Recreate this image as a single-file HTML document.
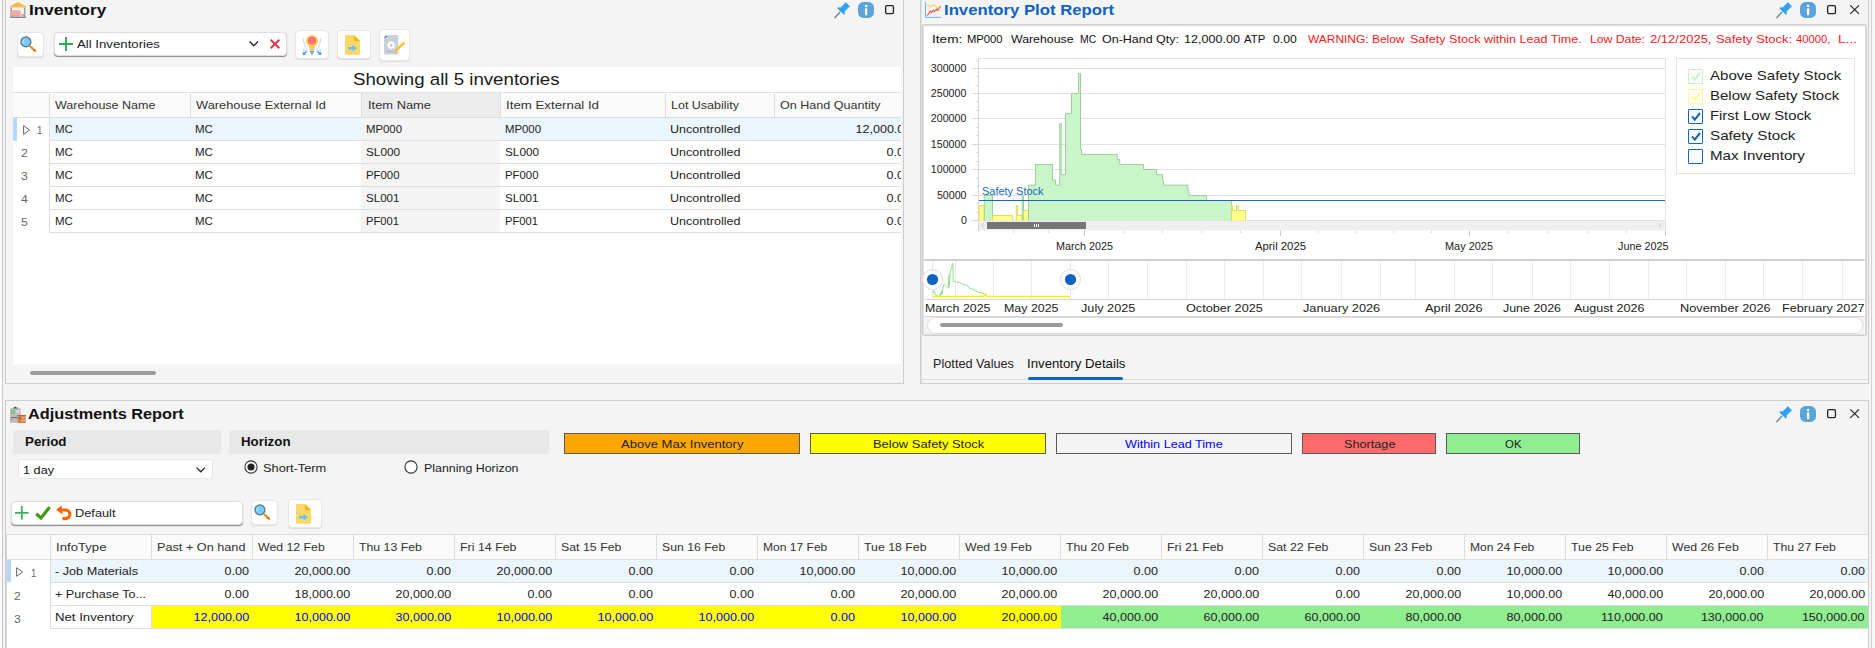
<!DOCTYPE html><html><head><meta charset="utf-8"><title>Inventory</title><style>
*{box-sizing:border-box;margin:0;padding:0}
html,body{width:1875px;height:648px;overflow:hidden;background:#f4f4f4}
body{position:relative;font-family:"Liberation Sans",sans-serif;font-size:11.3px;color:#222}
.a{position:absolute}
.t{position:absolute;white-space:nowrap;line-height:16px;height:16px}
.r{text-align:right}
.n{letter-spacing:0}
.b{font-weight:bold}
.hl{position:absolute;height:1px;background:#e2e2e2}
.vl{position:absolute;width:1px;background:#e2e2e2}
.btn{position:absolute;background:#fff;border:1px solid #e6e6e6;border-radius:4px;box-shadow:0 1px 1px rgba(0,0,0,.10)}
.inp{position:absolute;background:#fff;border:1px solid #dedede;border-radius:4px;box-shadow:0 1px 1px rgba(0,0,0,.45)}
svg{position:absolute;overflow:visible}
</style></head><body><div class="a" style="left:0px;top:0px;width:2px;height:648px;background:#fbfbfb"></div><div class="a" style="left:2px;top:0px;width:1px;height:648px;background:#c6c6c6"></div><div class="a" style="left:5px;top:-1px;width:899px;height:385px;border:1px solid #cdcdcd"></div><div class="a" style="left:920px;top:-1px;width:949px;height:385px;border:1px solid #cdcdcd"></div><div class="a" style="left:5px;top:400px;width:1864px;height:260px;border:1px solid #cdcdcd"></div><svg style="left:10px;top:2px" width="16" height="16" viewBox="0 0 16 16"><path d="M8 0 L16 4.3 V5.6 H0 V4.3Z" fill="#ffb74d"/><rect x=".6" y="5.6" width="1.5" height="9.4" fill="#90a4ae"/><rect x="13.9" y="5.6" width="1.5" height="9.4" fill="#90a4ae"/><rect x=".6" y="8.6" width="9.8" height="6.2" fill="#ea8c88"/><path d="M.6 10.6 H10.4 M.6 12.7 H10.4 M3 8.6 V10.6 M6 8.6 V10.6 M8.6 8.6 V10.6 M1.8 10.6 V12.7 M4.6 10.6 V12.7 M7.4 10.6 V12.7 M3 12.7 V14.8 M6 12.7 V14.8 M8.6 12.7 V14.8" stroke="#f6c9c6" stroke-width=".7"/><rect x="11.6" y="12" width="2.3" height="2.8" fill="#ef9a9a"/><rect x="0" y="14.8" width="16" height="1.2" fill="#78909c"/></svg><div class="t" style="left:29.00px;top:1.20px;line-height:18px;height:18px;font-size:14px;transform-origin:0 50%;transform:scaleX(1.2251);font-weight:bold;color:#111">Inventory</div><svg style="left:834px;top:0.8999999999999999px" width="17" height="17" viewBox="0 0 17 17"><path d="M1 16.6 L5.6 11.4" stroke="#7d8790" stroke-width="1.5" stroke-linecap="round"/><path d="M11.6 1 L16 5.4 L14.6 6.4 L10.6 10.6 L10.9 13.2 L9.6 13.6 L3.5 7.5 L3.9 6.2 L6.5 6.5 L10.7 2.5 Z" fill="#2fa2f5"/></svg><svg style="left:858px;top:2px" width="16" height="16" viewBox="0 0 16 16"><rect x="0" y="0" width="16" height="16" rx="5.6" fill="#5ba4db"/><circle cx="8.1" cy="4.1" r="1.25" fill="#fff"/><rect x="6.95" y="6.3" width="2.3" height="6.9" rx=".6" fill="#fff"/></svg><svg style="left:884.8px;top:4.8px" width="10" height="10" viewBox="0 0 10 10"><rect x=".65" y=".65" width="7.8" height="8" rx="1.3" fill="none" stroke="#222" stroke-width="1.3"/></svg><div class="btn" style="left:17px;top:32px;width:27px;height:25px"></div><svg style="left:20px;top:36px" width="20" height="20" viewBox="0 0 20 20"><path d="M10.6 10.6 L15.2 15" stroke="#f68b1f" stroke-width="2.3" stroke-linecap="round"/><path d="M13.9 13.7 L14.5 14.3" stroke="#6d5a4a" stroke-width="2.3"/><circle cx="5.9" cy="5.9" r="5" fill="#74cbf8" stroke="#546e7a" stroke-width="1.2"/><path d="M3.3 7.2 A3.2 3.2 0 0 1 4.3 3.4" stroke="#d6f0ff" stroke-width=".9" fill="none"/></svg><div class="inp" style="left:54px;top:32px;width:232.7px;height:24px"></div><svg style="left:59px;top:37px" width="14" height="14" viewBox="0 0 14 14"><path d="M7 0 V14 M0 7 H14" stroke="#34a853" stroke-width="1.9"/></svg><div class="t" style="left:77.20px;top:36.20px;line-height:16px;height:16px;font-size:11.3px;transform-origin:0 50%;transform:scaleX(1.1695);">All Inventories</div><svg style="left:249px;top:41px" width="10" height="6" viewBox="0 0 10 6"><path d="M.6 .6 L4.8 4.8 L9 .6" stroke="#222" stroke-width="1.35" fill="none"/></svg><svg style="left:270px;top:39px" width="10" height="10" viewBox="0 0 10 10"><path d="M.7 .7 L9.3 9.3 M9.3 .7 L.7 9.3" stroke="#e5394f" stroke-width="2.1"/></svg><div class="btn" style="left:295px;top:30px;width:34px;height:29px"></div><svg style="left:301px;top:34px" width="22" height="22" viewBox="0 0 22 22"><path d="M2.2 4.2 C2.6 9 4.4 13 6.6 16.6 M19.8 4.2 C19.4 9 17.6 13 15.4 16.6" stroke="#aab4bd" stroke-width=".6" fill="none"/><circle cx="11" cy="7" r="6" fill="#ffc857"/><path d="M7.6 11 H14.4 L13.4 15.4 H8.6Z" fill="#ffc857"/><circle cx="11" cy="6.6" r="3.9" fill="#ef6b73"/><path d="M9 6 C10 4.6 12 4.8 12.6 6.4 M9.6 8.2 C10.6 7.2 12 7.6 12.8 8.6" stroke="#f7a3a8" stroke-width=".7" fill="none"/><rect x="8.9" y="15.4" width="4.2" height="1.3" fill="#b0bec5"/><rect x="8.9" y="17" width="4.2" height="1.3" fill="#78909c"/><path d="M9.4 18.6 H12.6 L11.8 20.4 H10.2Z" fill="#90a4ae"/><path d="M1.6 21 L1.9 17.6 L3 18.6 L5 16.4 L6.2 17.5 L4.1 19.7 L5.2 20.8Z" fill="#4da3ff"/><path d="M2.2 15.2 L4 15.8 L2.8 16.8Z" fill="#4da3ff"/><path d="M20.4 21 L20.1 17.6 L19 18.6 L17 16.4 L15.8 17.5 L17.9 19.7 L16.8 20.8Z" fill="#4da3ff"/><path d="M19.8 15.2 L18 15.8 L19.2 16.8Z" fill="#4da3ff"/></svg><div class="btn" style="left:337px;top:30px;width:34px;height:29px"></div><svg style="left:345px;top:35px" width="15" height="20" viewBox="0 0 15 20"><path d="M1.2 0 H9 L15 6 V18.6 A1.2 1.2 0 0 1 13.8 19.8 H1.2 A1.2 1.2 0 0 1 0 18.6 V1.2 A1.2 1.2 0 0 1 1.2 0Z" fill="#ffd767"/><path d="M9 0 L15 6 H10.2 A1.2 1.2 0 0 1 9 4.8Z" fill="#ffb300"/><path d="M3 11.9 H7.6 V9.6 L11.8 13.2 L7.6 16.8 V14.5 H3Z" fill="#64c3f5"/></svg><div class="btn" style="left:379px;top:29px;width:31px;height:32px"></div><svg style="left:384px;top:35px" width="21" height="20" viewBox="0 0 21 20"><path d="M2.6 0 H14.3 V19.6 H0 V2.6Z" fill="#c8d0da"/><path d="M0 2.6 L2.6 0 V2.6Z" fill="#5f6f86"/><circle cx="7.3" cy="10.2" r="3.1" fill="#fff"/><path d="M7.3 6.1 V14.3 M3.2 10.2 H11.4 M4.4 7.3 L10.2 13.1 M10.2 7.3 L4.4 13.1" stroke="#fff" stroke-width="1.5"/><circle cx="7.3" cy="10.2" r="1.3" fill="#b4bfcc"/><path d="M1.8 16.6 H9" stroke="#9aa7b8" stroke-width=".7"/><path d="M11 16.4 L19.6 8.2" stroke="#fbc02d" stroke-width="2.5" stroke-linecap="round"/></svg><div class="a" style="left:13px;top:67px;width:888px;height:297px;background:#fff"></div><div class="t" style="left:353.30px;top:68.60px;line-height:22px;height:22px;font-size:16.7px;transform-origin:0 50%;transform:scaleX(1.1189);color:#1a1a1a">Showing all 5 inventories</div><div class="a" style="left:13px;top:92px;width:888px;height:26px;background:#fafafa"></div><div class="a" style="left:361px;top:92px;width:139px;height:26px;background:#ececec"></div><div class="a" style="left:361px;top:118px;width:139px;height:115px;background:#f4f4f4"></div><div class="a" style="left:49px;top:118px;width:312px;height:23px;background:#ebf5fd"></div><div class="a" style="left:500px;top:118px;width:401px;height:23px;background:#ebf5fd"></div><div class="a" style="left:13px;top:118px;width:4px;height:23px;background:#b3d9ff"></div><div class="hl" style="left:13px;top:92px;width:888px;"></div><div class="t" style="left:55.25px;top:97.00px;line-height:16px;height:16px;font-size:11.3px;transform-origin:0 50%;transform:scaleX(1.1087);color:#333">Warehouse Name</div><div class="t" style="left:196.25px;top:97.00px;line-height:16px;height:16px;font-size:11.3px;transform-origin:0 50%;transform:scaleX(1.1351);color:#333">Warehouse External Id</div><div class="t" style="left:367.50px;top:97.00px;line-height:16px;height:16px;font-size:11.3px;transform-origin:0 50%;transform:scaleX(1.1401);color:#333">Item Name</div><div class="t" style="left:505.50px;top:97.00px;line-height:16px;height:16px;font-size:11.3px;transform-origin:0 50%;transform:scaleX(1.1752);color:#333">Item External Id</div><div class="t" style="left:671.25px;top:97.00px;line-height:16px;height:16px;font-size:11.3px;transform-origin:0 50%;transform:scaleX(1.1048);color:#333">Lot Usability</div><div class="t" style="left:780.00px;top:97.00px;line-height:16px;height:16px;font-size:11.3px;transform-origin:0 50%;transform:scaleX(1.1111);color:#333">On Hand Quantity</div><div class="vl" style="left:49px;top:93px;height:24px;background:#dcdcdc"></div><div class="vl" style="left:190px;top:93px;height:24px;background:#dcdcdc"></div><div class="vl" style="left:361px;top:93px;height:24px;background:#dcdcdc"></div><div class="vl" style="left:500px;top:93px;height:24px;background:#dcdcdc"></div><div class="vl" style="left:665px;top:93px;height:24px;background:#dcdcdc"></div><div class="vl" style="left:774px;top:93px;height:24px;background:#dcdcdc"></div><div class="vl" style="left:49px;top:118px;height:115px;background:#dcdcdc"></div><div class="hl" style="left:13px;top:117px;width:888px;background:#dedede"></div><div class="hl" style="left:49px;top:140px;width:852px;background:#dedede"></div><div class="hl" style="left:49px;top:163px;width:852px;background:#dedede"></div><div class="hl" style="left:49px;top:186px;width:852px;background:#dedede"></div><div class="hl" style="left:49px;top:209px;width:852px;background:#dedede"></div><div class="hl" style="left:49px;top:232px;width:852px;background:#dedede"></div><svg style="left:22.6px;top:124.6px" width="8" height="10" viewBox="0 0 8 10"><path d="M.6 .7 L6.6 5 L.6 9.3Z" fill="none" stroke="#666" stroke-width="1"/></svg><div class="t" style="left:36.50px;top:122.20px;line-height:16px;height:16px;font-size:11.3px;transform-origin:0 50%;transform:scaleX(0.8500);color:#666">1</div><div class="t" style="left:54.50px;top:121.00px;line-height:16px;height:16px;font-size:11.3px;transform-origin:0 50%;transform:scaleX(1.0129);">MC</div><div class="t" style="left:195.30px;top:121.00px;line-height:16px;height:16px;font-size:11.3px;transform-origin:0 50%;transform:scaleX(1.0186);">MC</div><div class="t" style="left:366.30px;top:121.00px;line-height:16px;height:16px;font-size:11.3px;transform-origin:0 50%;transform:scaleX(1.0055);color:#222">MP000</div><div class="t" style="left:504.50px;top:121.00px;line-height:16px;height:16px;font-size:11.3px;transform-origin:0 50%;transform:scaleX(1.0055);color:#222">MP000</div><div class="t" style="left:670.00px;top:121.00px;line-height:16px;height:16px;font-size:11.3px;transform-origin:0 50%;transform:scaleX(1.1113);">Uncontrolled</div><div class="t" style="left:20.50px;top:145.20px;line-height:16px;height:16px;font-size:11.3px;transform-origin:0 50%;transform:scaleX(1.0820);color:#666">2</div><div class="t" style="left:54.50px;top:144.00px;line-height:16px;height:16px;font-size:11.3px;transform-origin:0 50%;transform:scaleX(1.0129);">MC</div><div class="t" style="left:195.30px;top:144.00px;line-height:16px;height:16px;font-size:11.3px;transform-origin:0 50%;transform:scaleX(1.0186);">MC</div><div class="t" style="left:366.30px;top:144.00px;line-height:16px;height:16px;font-size:11.3px;transform-origin:0 50%;transform:scaleX(1.0405);color:#222">SL000</div><div class="t" style="left:504.50px;top:144.00px;line-height:16px;height:16px;font-size:11.3px;transform-origin:0 50%;transform:scaleX(1.0405);color:#222">SL000</div><div class="t" style="left:670.00px;top:144.00px;line-height:16px;height:16px;font-size:11.3px;transform-origin:0 50%;transform:scaleX(1.1113);">Uncontrolled</div><div class="t" style="left:20.50px;top:168.20px;line-height:16px;height:16px;font-size:11.3px;transform-origin:0 50%;transform:scaleX(1.0820);color:#666">3</div><div class="t" style="left:54.50px;top:167.00px;line-height:16px;height:16px;font-size:11.3px;transform-origin:0 50%;transform:scaleX(1.0129);">MC</div><div class="t" style="left:195.30px;top:167.00px;line-height:16px;height:16px;font-size:11.3px;transform-origin:0 50%;transform:scaleX(1.0186);">MC</div><div class="t" style="left:366.30px;top:167.00px;line-height:16px;height:16px;font-size:11.3px;transform-origin:0 50%;transform:scaleX(1.0062);color:#222">PF000</div><div class="t" style="left:504.50px;top:167.00px;line-height:16px;height:16px;font-size:11.3px;transform-origin:0 50%;transform:scaleX(1.0062);color:#222">PF000</div><div class="t" style="left:670.00px;top:167.00px;line-height:16px;height:16px;font-size:11.3px;transform-origin:0 50%;transform:scaleX(1.1113);">Uncontrolled</div><div class="t" style="left:20.50px;top:191.20px;line-height:16px;height:16px;font-size:11.3px;transform-origin:0 50%;transform:scaleX(1.0820);color:#666">4</div><div class="t" style="left:54.50px;top:190.00px;line-height:16px;height:16px;font-size:11.3px;transform-origin:0 50%;transform:scaleX(1.0129);">MC</div><div class="t" style="left:195.30px;top:190.00px;line-height:16px;height:16px;font-size:11.3px;transform-origin:0 50%;transform:scaleX(1.0186);">MC</div><div class="t" style="left:366.30px;top:190.00px;line-height:16px;height:16px;font-size:11.3px;transform-origin:0 50%;transform:scaleX(1.0252);color:#222">SL001</div><div class="t" style="left:504.50px;top:190.00px;line-height:16px;height:16px;font-size:11.3px;transform-origin:0 50%;transform:scaleX(1.0252);color:#222">SL001</div><div class="t" style="left:670.00px;top:190.00px;line-height:16px;height:16px;font-size:11.3px;transform-origin:0 50%;transform:scaleX(1.1113);">Uncontrolled</div><div class="t" style="left:20.50px;top:214.20px;line-height:16px;height:16px;font-size:11.3px;transform-origin:0 50%;transform:scaleX(1.0820);color:#666">5</div><div class="t" style="left:54.50px;top:213.00px;line-height:16px;height:16px;font-size:11.3px;transform-origin:0 50%;transform:scaleX(1.0129);">MC</div><div class="t" style="left:195.30px;top:213.00px;line-height:16px;height:16px;font-size:11.3px;transform-origin:0 50%;transform:scaleX(1.0186);">MC</div><div class="t" style="left:366.30px;top:213.00px;line-height:16px;height:16px;font-size:11.3px;transform-origin:0 50%;transform:scaleX(0.9912);color:#222">PF001</div><div class="t" style="left:504.50px;top:213.00px;line-height:16px;height:16px;font-size:11.3px;transform-origin:0 50%;transform:scaleX(0.9912);color:#222">PF001</div><div class="t" style="left:670.00px;top:213.00px;line-height:16px;height:16px;font-size:11.3px;transform-origin:0 50%;transform:scaleX(1.1113);">Uncontrolled</div><div class="a" style="left:775px;top:118px;width:126px;height:115px;overflow:hidden"><div class="t" style="right:-10.1px;top:3px;font-size:11.3px;transform-origin:100% 50%;transform:scaleX(1.108)">12,000.00</div><div class="t" style="right:-10.1px;top:26px;font-size:11.3px;transform-origin:100% 50%;transform:scaleX(1.108)">0.00</div><div class="t" style="right:-10.1px;top:49px;font-size:11.3px;transform-origin:100% 50%;transform:scaleX(1.108)">0.00</div><div class="t" style="right:-10.1px;top:72px;font-size:11.3px;transform-origin:100% 50%;transform:scaleX(1.108)">0.00</div><div class="t" style="right:-10.1px;top:95px;font-size:11.3px;transform-origin:100% 50%;transform:scaleX(1.108)">0.00</div></div><div class="a" style="left:30px;top:370.5px;width:126px;height:4px;background:#9b9b9b;border-radius:2px"></div><svg style="left:925px;top:2px" width="17" height="16" viewBox="0 0 17 16"><path d="M.5 0 V15.4 H16" stroke="#64b5f6" stroke-width="1" fill="none"/><path d="M2.4 2.4 L5 5 L7.4 3.2 L9.4 3.4 L12 5.4 L14 8.6 L15.4 9.2" stroke="#fdd14a" stroke-width="1.1" fill="none"/><path d="M2.2 13.6 L5.4 9 L6.2 10.6 L8.4 8.2 L9.2 9.6 L11.4 7.4 L12.2 8.6 L15.6 4.2" stroke="#ef5350" stroke-width="1.1" fill="none"/></svg><div class="t" style="left:944.00px;top:1.20px;line-height:18px;height:18px;font-size:14px;transform-origin:0 50%;transform:scaleX(1.1943);font-weight:bold;color:#0d62c4">Inventory Plot Report</div><svg style="left:1776px;top:0.8999999999999999px" width="17" height="17" viewBox="0 0 17 17"><path d="M1 16.6 L5.6 11.4" stroke="#7d8790" stroke-width="1.5" stroke-linecap="round"/><path d="M11.6 1 L16 5.4 L14.6 6.4 L10.6 10.6 L10.9 13.2 L9.6 13.6 L3.5 7.5 L3.9 6.2 L6.5 6.5 L10.7 2.5 Z" fill="#2fa2f5"/></svg><svg style="left:1800px;top:2px" width="16" height="16" viewBox="0 0 16 16"><rect x="0" y="0" width="16" height="16" rx="5.6" fill="#5ba4db"/><circle cx="8.1" cy="4.1" r="1.25" fill="#fff"/><rect x="6.95" y="6.3" width="2.3" height="6.9" rx=".6" fill="#fff"/></svg><svg style="left:1826.8px;top:4.8px" width="10" height="10" viewBox="0 0 10 10"><rect x=".65" y=".65" width="7.8" height="8" rx="1.3" fill="none" stroke="#222" stroke-width="1.3"/></svg><svg style="left:1850px;top:5px" width="10" height="10" viewBox="0 0 10 10"><path d="M.3 .3 L9 8.9 M9 .3 L.3 8.9" stroke="#222" stroke-width="1.15" fill="none"/></svg><div class="a" style="left:921px;top:0px;width:1px;height:383px;background:#e0e0e0"></div><div class="a" style="left:922px;top:24px;width:945px;height:312px;background:#fff;border:1px solid #cdcdcd;border-radius:2px;box-shadow:inset 0 0 0 1px #e2e2e2"></div><div class="a" style="left:924px;top:26px;width:941px;height:1px;background:#f2f2f2"></div><div class="a" style="left:924px;top:317px;width:941px;height:17px;background:#f4f4f4"></div><div class="t" style="left:932.30px;top:31.00px;line-height:16px;height:16px;font-size:11.3px;transform-origin:0 50%;transform:scaleX(1.2064);color:#111">Item:</div><div class="t" style="left:966.60px;top:31.00px;line-height:16px;height:16px;font-size:11.3px;transform-origin:0 50%;transform:scaleX(0.9943);color:#111">MP000</div><div class="t" style="left:1010.50px;top:31.00px;line-height:16px;height:16px;font-size:11.3px;transform-origin:0 50%;transform:scaleX(1.0895);color:#111">Warehouse</div><div class="t" style="left:1073.60px;top:31.00px;line-height:16px;height:16px;font-size:11.3px;transform-origin:0 50%;transform:scaleX(0.8500);color:#f5c9a0">:</div><div class="t" style="left:1080.30px;top:31.00px;line-height:16px;height:16px;font-size:11.3px;transform-origin:0 50%;transform:scaleX(0.9218);color:#111">MC</div><div class="t" style="left:1101.50px;top:31.00px;line-height:16px;height:16px;font-size:11.3px;transform-origin:0 50%;transform:scaleX(1.1046);color:#111">On-Hand Qty:</div><div class="t" style="left:1184.30px;top:31.00px;line-height:16px;height:16px;font-size:11.3px;transform-origin:0 50%;transform:scaleX(1.1120);color:#111">12,000.00</div><div class="t" style="left:1244.30px;top:31.00px;line-height:16px;height:16px;font-size:11.3px;transform-origin:0 50%;transform:scaleX(1.0029);color:#111">ATP</div><div class="t" style="left:1266.40px;top:31.00px;line-height:16px;height:16px;font-size:11.3px;transform-origin:0 50%;transform:scaleX(0.8500);color:#f5c9a0">:</div><div class="t" style="left:1272.50px;top:31.00px;line-height:16px;height:16px;font-size:11.3px;transform-origin:0 50%;transform:scaleX(1.0776);color:#111">0.00</div><div class="t" style="left:1308.00px;top:31.00px;line-height:16px;height:16px;font-size:11.3px;transform-origin:0 50%;transform:scaleX(1.0575);color:#fa1820">WARNING: Below</div><div class="t" style="left:1409.50px;top:31.00px;line-height:16px;height:16px;font-size:11.3px;transform-origin:0 50%;transform:scaleX(1.1113);color:#fa1820">Safety Stock within Lead Time.</div><div class="t" style="left:1590.00px;top:31.00px;line-height:16px;height:16px;font-size:11.3px;transform-origin:0 50%;transform:scaleX(1.0810);color:#fa1820">Low Date:</div><div class="t" style="left:1650.00px;top:31.00px;line-height:16px;height:16px;font-size:11.3px;transform-origin:0 50%;transform:scaleX(1.1515);color:#fa1820">2/12/2025,</div><div class="t" style="left:1716.00px;top:31.00px;line-height:16px;height:16px;font-size:11.3px;transform-origin:0 50%;transform:scaleX(1.1416);color:#fa1820">Safety Stock:</div><div class="t" style="left:1795.80px;top:31.00px;line-height:16px;height:16px;font-size:11.3px;transform-origin:0 50%;transform:scaleX(0.9953);color:#fa1820">40000,</div><div class="t" style="left:1837.50px;top:31.00px;line-height:16px;height:16px;font-size:11.3px;transform-origin:0 50%;transform:scaleX(1.2100);color:#fa1820">L...</div><svg style="left:0;top:0" width="1875" height="340" viewBox="0 0 1875 340"><path d="M978.5 58.5 H1665.5 V230" stroke="#e3e3e3" fill="none"/><path d="M978 220.5 H1665" stroke="#e1e1e1"/><path d="M972.5 220.5 H978" stroke="#d4d4d4"/><path d="M978 195.5 H1665" stroke="#e1e1e1"/><path d="M972.5 195.5 H978" stroke="#d4d4d4"/><path d="M978 169.5 H1665" stroke="#e1e1e1"/><path d="M972.5 169.5 H978" stroke="#d4d4d4"/><path d="M978 144.5 H1665" stroke="#e1e1e1"/><path d="M972.5 144.5 H978" stroke="#d4d4d4"/><path d="M978 118.5 H1665" stroke="#e1e1e1"/><path d="M972.5 118.5 H978" stroke="#d4d4d4"/><path d="M978 93.5 H1665" stroke="#e1e1e1"/><path d="M972.5 93.5 H978" stroke="#d4d4d4"/><path d="M978 68.5 H1665" stroke="#e1e1e1"/><path d="M972.5 68.5 H978" stroke="#d4d4d4"/><path d="M976 212.5 H978" stroke="#dcdcdc"/><path d="M976 203.5 H978" stroke="#dcdcdc"/><path d="M976 186.5 H978" stroke="#dcdcdc"/><path d="M976 178.5 H978" stroke="#dcdcdc"/><path d="M976 161.5 H978" stroke="#dcdcdc"/><path d="M976 152.5 H978" stroke="#dcdcdc"/><path d="M976 135.5 H978" stroke="#dcdcdc"/><path d="M976 127.5 H978" stroke="#dcdcdc"/><path d="M976 110.5 H978" stroke="#dcdcdc"/><path d="M976 101.5 H978" stroke="#dcdcdc"/><path d="M976 85.5 H978" stroke="#dcdcdc"/><path d="M976 76.5 H978" stroke="#dcdcdc"/><path d="M976 60.1 H978" stroke="#dcdcdc"/><path d="M978.5 58 V231" stroke="#d6d6d6"/><path d="M979 220.50 L979 205.50 L984.25 205.50 L984.25 220.50 Z" fill="#ffff8a"/><path d="M979 220.50 L979 205.50 L984.25 205.50 L984.25 220.50" fill="none" stroke="#dcdc5e" stroke-width="1"/><path d="M984.25 220.50 L984.25 195.50 L992.5 195.50 L992.5 220.50 Z" fill="#c9f5c9"/><path d="M984.25 220.50 L984.25 195.50 L992.5 195.50 L992.5 220.50" fill="none" stroke="#9ccf9c" stroke-width="1"/><path d="M992.5 220.50 L992.5 215.50 L1012.75 215.50 L1012.75 220.50 Z" fill="#ffff8a"/><path d="M992.5 220.50 L992.5 215.50 L1012.75 215.50 L1012.75 220.50" fill="none" stroke="#dcdc5e" stroke-width="1"/><path d="M1016.25 220.50 L1016.25 205.50 L1017.75 205.50 L1017.75 215.50 L1022.25 215.50 L1022.25 220.50 Z" fill="#ffff8a"/><path d="M1016.25 220.50 L1016.25 205.50 L1017.75 205.50 L1017.75 215.50 L1022.25 215.50 L1022.25 220.50" fill="none" stroke="#dcdc5e" stroke-width="1"/><path d="M1022.25 220.50 L1022.25 195.50 L1023.5 195.50 L1023.5 220.50 Z" fill="#c9f5c9"/><path d="M1022.25 220.50 L1022.25 195.50 L1023.5 195.50 L1023.5 220.50" fill="none" stroke="#9ccf9c" stroke-width="1"/><path d="M1023.5 220.50 L1023.5 210.50 L1028.5 210.50 L1028.5 220.50 Z" fill="#ffff8a"/><path d="M1023.5 220.50 L1023.5 210.50 L1028.5 210.50 L1028.5 220.50" fill="none" stroke="#dcdc5e" stroke-width="1"/><path d="M1028.5 220.50 L1028.5 185.10 L1035.5 185.10 L1035.5 164.50 L1052.5 164.50 L1052.5 179.90 L1055.5 179.90 L1055.5 185.10 L1059.75 185.10 L1059.75 123.70 L1061.25 123.70 L1061.25 174.70 L1065.5 174.70 L1065.5 113.50 L1071.5 113.50 L1071.5 93.50 L1078.5 93.50 L1078.5 73.50 L1080.5 73.50 L1080.5 149.50 L1081.5 149.50 L1081.5 154.50 L1117.25 154.50 L1117.25 159.50 L1119.75 159.50 L1119.75 164.50 L1143.5 164.50 L1143.5 169.50 L1156.5 169.50 L1156.5 174.70 L1162.5 174.70 L1162.5 179.90 L1163.5 179.90 L1163.5 185.10 L1187.75 185.10 L1187.75 190.30 L1189 190.30 L1189 195.50 L1206.5 195.50 L1206.5 200.50 L1231.5 200.50 L1231.5 220.50 Z" fill="#c9f5c9"/><path d="M1028.5 220.50 L1028.5 185.10 L1035.5 185.10 L1035.5 164.50 L1052.5 164.50 L1052.5 179.90 L1055.5 179.90 L1055.5 185.10 L1059.75 185.10 L1059.75 123.70 L1061.25 123.70 L1061.25 174.70 L1065.5 174.70 L1065.5 113.50 L1071.5 113.50 L1071.5 93.50 L1078.5 93.50 L1078.5 73.50 L1080.5 73.50 L1080.5 149.50 L1081.5 149.50 L1081.5 154.50 L1117.25 154.50 L1117.25 159.50 L1119.75 159.50 L1119.75 164.50 L1143.5 164.50 L1143.5 169.50 L1156.5 169.50 L1156.5 174.70 L1162.5 174.70 L1162.5 179.90 L1163.5 179.90 L1163.5 185.10 L1187.75 185.10 L1187.75 190.30 L1189 190.30 L1189 195.50 L1206.5 195.50 L1206.5 200.50 L1231.5 200.50 L1231.5 220.50" fill="none" stroke="#9ccf9c" stroke-width="1"/><path d="M1231.5 220.50 L1231.5 205.50 L1232.5 205.50 L1232.5 210.50 L1236.5 210.50 L1236.5 205.50 L1238.5 205.50 L1238.5 210.50 L1245.5 210.50 L1245.5 220.50 Z" fill="#ffff8a"/><path d="M1231.5 220.50 L1231.5 205.50 L1232.5 205.50 L1232.5 210.50 L1236.5 210.50 L1236.5 205.50 L1238.5 205.50 L1238.5 210.50 L1245.5 210.50 L1245.5 220.50" fill="none" stroke="#dcdc5e" stroke-width="1"/><path d="M979 200.5 H1665" stroke="#1565c0" stroke-width="1.15"/><rect x="979" y="221" width="686" height="9.5" fill="#efefef"/><rect x="987" y="222" width="99" height="7" fill="#757575"/><path d="M1034.5 224 V227 M1036.5 224 V227 M1038.5 224 V227" stroke="#fff" stroke-width="1"/><path d="M984 223.4 L981.6 225.5 L984 227.6" stroke="#cfcfcf" fill="none"/><path d="M1658.5 223.4 L1661 225.5 L1658.5 227.6" stroke="#cfcfcf" fill="none"/><path d="M1084.5 230.5 V236" stroke="#c9c9c9"/><path d="M1280.5 230.5 V236" stroke="#c9c9c9"/><path d="M1469.5 230.5 V236" stroke="#c9c9c9"/><path d="M1665.5 230.5 V236" stroke="#c9c9c9"/><path d="M1013.5 230.5 V233" stroke="#d9d9d9"/><path d="M1048.5 230.5 V233" stroke="#d9d9d9"/><path d="M1123.5 230.5 V233" stroke="#d9d9d9"/><path d="M1162.5 230.5 V233" stroke="#d9d9d9"/><path d="M1201.5 230.5 V233" stroke="#d9d9d9"/><path d="M1240.5 230.5 V233" stroke="#d9d9d9"/><path d="M1318.5 230.5 V233" stroke="#d9d9d9"/><path d="M1355.5 230.5 V233" stroke="#d9d9d9"/><path d="M1393.5 230.5 V233" stroke="#d9d9d9"/><path d="M1431.5 230.5 V233" stroke="#d9d9d9"/><path d="M1508.5 230.5 V233" stroke="#d9d9d9"/><path d="M1547.5 230.5 V233" stroke="#d9d9d9"/><path d="M1587.5 230.5 V233" stroke="#d9d9d9"/><path d="M1626.5 230.5 V233" stroke="#d9d9d9"/></svg><div class="t" style="right:908.40px;top:212.20px;line-height:16px;height:16px;font-size:10.6px;transform-origin:100% 50%;transform:scaleX(1.0042);color:#222">0</div><div class="t" style="right:908.40px;top:187.20px;line-height:16px;height:16px;font-size:10.6px;transform-origin:100% 50%;transform:scaleX(1.0042);color:#222">50000</div><div class="t" style="right:908.40px;top:161.20px;line-height:16px;height:16px;font-size:10.6px;transform-origin:100% 50%;transform:scaleX(1.0042);color:#222">100000</div><div class="t" style="right:908.40px;top:136.20px;line-height:16px;height:16px;font-size:10.6px;transform-origin:100% 50%;transform:scaleX(1.0042);color:#222">150000</div><div class="t" style="right:908.40px;top:110.20px;line-height:16px;height:16px;font-size:10.6px;transform-origin:100% 50%;transform:scaleX(1.0042);color:#222">200000</div><div class="t" style="right:908.40px;top:85.20px;line-height:16px;height:16px;font-size:10.6px;transform-origin:100% 50%;transform:scaleX(1.0042);color:#222">250000</div><div class="t" style="right:908.40px;top:60.20px;line-height:16px;height:16px;font-size:10.6px;transform-origin:100% 50%;transform:scaleX(1.0042);color:#222">300000</div><div class="t" style="left:981.50px;top:182.70px;line-height:16px;height:16px;font-size:10.8px;transform-origin:0 50%;transform:scaleX(1.0144);color:#1565c0">Safety Stock</div><div class="t" style="left:1056.00px;top:238.00px;line-height:16px;height:16px;font-size:10.6px;transform-origin:0 50%;transform:scaleX(1.0183);color:#222">March 2025</div><div class="t" style="left:1255.00px;top:238.00px;line-height:16px;height:16px;font-size:10.6px;transform-origin:0 50%;transform:scaleX(1.0685);color:#222">April 2025</div><div class="t" style="left:1444.50px;top:238.00px;line-height:16px;height:16px;font-size:10.6px;transform-origin:0 50%;transform:scaleX(1.0311);color:#222">May 2025</div><div class="t" style="left:1618.25px;top:238.00px;line-height:16px;height:16px;font-size:10.6px;transform-origin:0 50%;transform:scaleX(1.0200);color:#222">June 2025</div><div class="a" style="left:1676px;top:58px;width:179px;height:116px;border:1px solid #e4e4e4;background:#fff"></div><div class="a" style="left:1688px;top:69px;width:15px;height:15px;border:1px solid #c6f1c6;background:#fff;border-radius:1px"></div><svg style="left:1691px;top:72px" width="10" height="9" viewBox="0 0 10 9"><path d="M1 4.4 L3.8 7.6 L9 1" stroke="#c6f1c6" stroke-width="2.1" fill="none"/></svg><div class="t" style="left:1709.50px;top:66.70px;line-height:18px;height:18px;font-size:12.9px;transform-origin:0 50%;transform:scaleX(1.1663);color:#222">Above Safety Stock</div><div class="a" style="left:1688px;top:89px;width:15px;height:15px;border:1px solid #ffff8c;background:#fff;border-radius:1px"></div><svg style="left:1691px;top:92px" width="10" height="9" viewBox="0 0 10 9"><path d="M1 4.4 L3.8 7.6 L9 1" stroke="#ffff8c" stroke-width="2.1" fill="none"/></svg><div class="t" style="left:1709.50px;top:86.70px;line-height:18px;height:18px;font-size:12.9px;transform-origin:0 50%;transform:scaleX(1.1634);color:#222">Below Safety Stock</div><div class="a" style="left:1688px;top:109px;width:15px;height:15px;border:1px solid #1565c0;background:#fff;border-radius:1px"></div><svg style="left:1691px;top:112px" width="10" height="9" viewBox="0 0 10 9"><path d="M1 4.4 L3.8 7.6 L9 1" stroke="#1565c0" stroke-width="2.1" fill="none"/></svg><div class="t" style="left:1709.50px;top:106.70px;line-height:18px;height:18px;font-size:12.9px;transform-origin:0 50%;transform:scaleX(1.1489);color:#222">First Low Stock</div><div class="a" style="left:1688px;top:129px;width:15px;height:15px;border:1px solid #1565c0;background:#fff;border-radius:1px"></div><svg style="left:1691px;top:132px" width="10" height="9" viewBox="0 0 10 9"><path d="M1 4.4 L3.8 7.6 L9 1" stroke="#1565c0" stroke-width="2.1" fill="none"/></svg><div class="t" style="left:1709.50px;top:126.70px;line-height:18px;height:18px;font-size:12.9px;transform-origin:0 50%;transform:scaleX(1.1806);color:#222">Safety Stock</div><div class="a" style="left:1688px;top:149px;width:15px;height:15px;border:1px solid #1565c0;background:#fff;border-radius:1px"></div><div class="t" style="left:1709.50px;top:146.70px;line-height:18px;height:18px;font-size:12.9px;transform-origin:0 50%;transform:scaleX(1.1726);color:#222">Max Inventory</div><div class="a" style="left:924px;top:259px;width:941px;height:2px;background:#cfcfcf"></div><svg style="left:0;top:0" width="1875" height="340" viewBox="0 0 1875 340"><path d="M955.5 261 V299" stroke="#ebebeb"/><path d="M993.5 261 V299" stroke="#ebebeb"/><path d="M1031.5 261 V299" stroke="#ebebeb"/><path d="M1070.5 261 V299" stroke="#ebebeb"/><path d="M1108.5 261 V299" stroke="#ebebeb"/><path d="M1147.5 261 V299" stroke="#ebebeb"/><path d="M1186.5 261 V299" stroke="#ebebeb"/><path d="M1224.5 261 V299" stroke="#ebebeb"/><path d="M1263.5 261 V299" stroke="#ebebeb"/><path d="M1301.5 261 V299" stroke="#ebebeb"/><path d="M1341.5 261 V299" stroke="#ebebeb"/><path d="M1380.5 261 V299" stroke="#ebebeb"/><path d="M1415.5 261 V299" stroke="#ebebeb"/><path d="M1454.5 261 V299" stroke="#ebebeb"/><path d="M1492.5 261 V299" stroke="#ebebeb"/><path d="M1532.5 261 V299" stroke="#ebebeb"/><path d="M1570.5 261 V299" stroke="#ebebeb"/><path d="M1609.5 261 V299" stroke="#ebebeb"/><path d="M1648.5 261 V299" stroke="#ebebeb"/><path d="M1686.5 261 V299" stroke="#ebebeb"/><path d="M1725.5 261 V299" stroke="#ebebeb"/><path d="M1763.5 261 V299" stroke="#ebebeb"/><path d="M1802.5 261 V299" stroke="#ebebeb"/><path d="M1842.5 261 V299" stroke="#ebebeb"/><path d="M932.5 261 V299 M1070.5 261 V299" stroke="#e6e6e6"/><path d="M924 299.5 H1865 M924 316.5 H1865" stroke="#d4d4d4"/><path d="M933.0 293.0 L934.0 290.7 L935.6 295.3 L939.7 296.5 L940.5 293.0 L940.7 295.3 L941.7 290.7 L941.9 294.2 L942.9 288.4 L944.3 283.8 L947.7 287.3 L948.2 288.4 L949.0 274.6 L949.4 286.1 L950.2 272.2 L951.4 267.6 L952.8 263.0 L953.2 280.3 L953.4 281.5 L960.3 282.6 L960.9 283.8 L965.7 284.9 L968.2 286.1 L969.4 288.4 L974.4 289.6 L974.6 290.7 L978.1 291.9 L983.1 293.6 L984.5 294.2 L985.9 296.5" stroke="#8fe08f" stroke-width="1" fill="none"/><path d="M933 296.5 H983 L985.5 293.8 L987.5 296.5 H1070" stroke="#f4f400" stroke-width="1.3" fill="none"/><circle cx="932.5" cy="279.5" r="10" fill="#fff" stroke="#dcdcdc" stroke-width="1"/><circle cx="932.5" cy="279.5" r="5.6" fill="#0d62c4"/><circle cx="1070.5" cy="279.5" r="10" fill="#fff" stroke="#dcdcdc" stroke-width="1"/><circle cx="1070.5" cy="279.5" r="5.6" fill="#0d62c4"/><rect x="927.5" y="317.5" width="935.5" height="16" rx="8" fill="#fff" stroke="#dcdcdc"/><rect x="940" y="323" width="123" height="4" rx="2" fill="#9a9a9a"/></svg><div class="t" style="left:925.00px;top:299.80px;line-height:16px;height:16px;font-size:11.5px;transform-origin:0 50%;transform:scaleX(1.0786);color:#222">March 2025</div><div class="t" style="left:1004.00px;top:299.80px;line-height:16px;height:16px;font-size:11.5px;transform-origin:0 50%;transform:scaleX(1.0791);color:#222">May 2025</div><div class="t" style="left:1080.50px;top:299.80px;line-height:16px;height:16px;font-size:11.5px;transform-origin:0 50%;transform:scaleX(1.1030);color:#222">July 2025</div><div class="t" style="left:1186.00px;top:299.80px;line-height:16px;height:16px;font-size:11.5px;transform-origin:0 50%;transform:scaleX(1.1021);color:#222">October 2025</div><div class="t" style="left:1302.80px;top:299.80px;line-height:16px;height:16px;font-size:11.5px;transform-origin:0 50%;transform:scaleX(1.1077);color:#222">January 2026</div><div class="t" style="left:1425.20px;top:299.80px;line-height:16px;height:16px;font-size:11.5px;transform-origin:0 50%;transform:scaleX(1.1123);color:#222">April 2026</div><div class="t" style="left:1503.00px;top:299.80px;line-height:16px;height:16px;font-size:11.5px;transform-origin:0 50%;transform:scaleX(1.0798);color:#222">June 2026</div><div class="t" style="left:1574.20px;top:299.80px;line-height:16px;height:16px;font-size:11.5px;transform-origin:0 50%;transform:scaleX(1.0901);color:#222">August 2026</div><div class="t" style="left:1680.00px;top:299.80px;line-height:16px;height:16px;font-size:11.5px;transform-origin:0 50%;transform:scaleX(1.1072);color:#222">November 2026</div><div class="t" style="left:1782.00px;top:299.80px;line-height:16px;height:16px;font-size:11.5px;transform-origin:0 50%;transform:scaleX(1.1030);color:#222">February 2027</div><div class="t" style="left:933.00px;top:356.00px;line-height:16px;height:16px;font-size:11.9px;transform-origin:0 50%;transform:scaleX(1.0678);color:#222">Plotted Values</div><div class="t" style="left:1026.50px;top:356.00px;line-height:16px;height:16px;font-size:11.9px;transform-origin:0 50%;transform:scaleX(1.1114);color:#111">Inventory Details</div><div class="a" style="left:921px;top:379px;width:947px;height:1px;background:#dcdcdc"></div><div class="a" style="left:1028px;top:377px;width:95px;height:3px;background:#0d62c4;border-radius:1.5px"></div><svg style="left:10px;top:406px" width="17" height="17" viewBox="0 0 17 17"><rect x="0" y="2.2" width="10.8" height="14.6" rx=".8" fill="#bdbdbd"/><path d="M3.2 2.6 V1.6 H4.6 L5.4 .2 L6.2 1.6 H7.6 V2.6Z" fill="#424242"/><rect x="1" y="4" width="3.8" height="3.5" fill="#66bb6a"/><path d="M1.9 6.6 L3.9 4.8" stroke="#e8f5e9" stroke-width=".7"/><rect x="6" y="4.4" width="3.8" height="2.6" fill="#d9d9d9"/><rect x="1" y="11" width="6" height=".9" fill="#616161"/><rect x="1.2" y="13.4" width="1.6" height=".7" fill="#ef5350"/><rect x="7.2" y="9" width="8.8" height="1.2" fill="#b5642f"/><rect x="7.6" y="10.2" width="8" height="6.8" fill="#d2814a"/><rect x="9" y="11.4" width="1.6" height="1.4" fill="#7a4a2a"/><path d="M11.6 11.4 H14.4 V12.6 H11.6Z M11.4 14 H12.6 V15.4 H11.4Z M13.4 14 H14.6 V15.4 H13.4Z" fill="#f0c9a8"/></svg><div class="t" style="left:28.00px;top:405.20px;line-height:18px;height:18px;font-size:14px;transform-origin:0 50%;transform:scaleX(1.1645);font-weight:bold;color:#111">Adjustments Report</div><svg style="left:1776px;top:404.9px" width="17" height="17" viewBox="0 0 17 17"><path d="M1 16.6 L5.6 11.4" stroke="#7d8790" stroke-width="1.5" stroke-linecap="round"/><path d="M11.6 1 L16 5.4 L14.6 6.4 L10.6 10.6 L10.9 13.2 L9.6 13.6 L3.5 7.5 L3.9 6.2 L6.5 6.5 L10.7 2.5 Z" fill="#2fa2f5"/></svg><svg style="left:1800px;top:406px" width="16" height="16" viewBox="0 0 16 16"><rect x="0" y="0" width="16" height="16" rx="5.6" fill="#5ba4db"/><circle cx="8.1" cy="4.1" r="1.25" fill="#fff"/><rect x="6.95" y="6.3" width="2.3" height="6.9" rx=".6" fill="#fff"/></svg><svg style="left:1826.8px;top:408.8px" width="10" height="10" viewBox="0 0 10 10"><rect x=".65" y=".65" width="7.8" height="8" rx="1.3" fill="none" stroke="#222" stroke-width="1.3"/></svg><svg style="left:1850px;top:409px" width="10" height="10" viewBox="0 0 10 10"><path d="M.3 .3 L9 8.9 M9 .3 L.3 8.9" stroke="#222" stroke-width="1.15" fill="none"/></svg><div class="a" style="left:13px;top:430px;width:208px;height:24px;background:#e8e8e8"></div><div class="a" style="left:229px;top:430px;width:320px;height:24px;background:#e8e8e8"></div><div class="t" style="left:25.00px;top:434.00px;line-height:16px;height:16px;font-size:12px;transform-origin:0 50%;transform:scaleX(1.1114);font-weight:bold;color:#111">Period</div><div class="t" style="left:241.00px;top:434.00px;line-height:16px;height:16px;font-size:12px;transform-origin:0 50%;transform:scaleX(1.1084);font-weight:bold;color:#111">Horizon</div><div class="a" style="left:18px;top:459.3px;width:195px;height:20px;background:#fff;border:1px solid #e6e6e6;border-radius:3px"></div><div class="t" style="left:22.50px;top:462.00px;line-height:16px;height:16px;font-size:11.3px;transform-origin:0 50%;transform:scaleX(1.1251);color:#111">1 day</div><svg style="left:196px;top:466.5px" width="10" height="6" viewBox="0 0 10 6"><path d="M.6 .6 L4.8 4.8 L9 .6" stroke="#222" stroke-width="1.3" fill="none"/></svg><svg style="left:243.5px;top:460px" width="14" height="14" viewBox="0 0 14 14"><circle cx="7" cy="7" r="6.1" fill="#fff" stroke="#333" stroke-width="1.1"/><circle cx="7" cy="7" r="3.6" fill="#222"/></svg><div class="t" style="left:263.20px;top:459.50px;line-height:16px;height:16px;font-size:11.3px;transform-origin:0 50%;transform:scaleX(1.1327);color:#222">Short-Term</div><svg style="left:404.4px;top:460px" width="14" height="14" viewBox="0 0 14 14"><circle cx="7" cy="7" r="6.1" fill="#fff" stroke="#333" stroke-width="1.1"/></svg><div class="t" style="left:424.20px;top:459.50px;line-height:16px;height:16px;font-size:11.3px;transform-origin:0 50%;transform:scaleX(1.0981);color:#222">Planning Horizon</div><div class="a" style="left:564px;top:433px;width:236px;height:21px;background:#ffa500;border:1px solid #5a5a5a"></div><div class="t" style="left:620.50px;top:435.70px;line-height:16px;height:16px;font-size:11.3px;transform-origin:0 50%;transform:scaleX(1.1541);color:#222">Above Max Inventory</div><div class="a" style="left:810px;top:433px;width:236px;height:21px;background:#ffff00;border:1px solid #5a5a5a"></div><div class="t" style="left:872.50px;top:435.70px;line-height:16px;height:16px;font-size:11.3px;transform-origin:0 50%;transform:scaleX(1.1433);color:#222">Below Safety Stock</div><div class="a" style="left:1056px;top:433px;width:236px;height:21px;background:transparent;border:1px solid #5a5a5a"></div><div class="t" style="left:1125.30px;top:435.70px;line-height:16px;height:16px;font-size:11.3px;transform-origin:0 50%;transform:scaleX(1.1191);color:#0000ff">Within Lead Time</div><div class="a" style="left:1302px;top:433px;width:134px;height:21px;background:#ff6b6b;border:1px solid #5a5a5a"></div><div class="t" style="left:1343.50px;top:435.70px;line-height:16px;height:16px;font-size:11.3px;transform-origin:0 50%;transform:scaleX(1.1229);color:#222">Shortage</div><div class="a" style="left:1446px;top:433px;width:134px;height:21px;background:#90ee90;border:1px solid #5a5a5a"></div><div class="t" style="left:1504.50px;top:435.70px;line-height:16px;height:16px;font-size:11.3px;transform-origin:0 50%;transform:scaleX(1.0106);color:#222">OK</div><div class="inp" style="left:10.5px;top:500.5px;width:232px;height:24.7px"></div><svg style="left:15.2px;top:506.3px" width="13.6" height="13.6" viewBox="0 0 13.6 13.6"><path d="M6.8 0 V13.6 M0 6.8 H13.6" stroke="#3aae5e" stroke-width="1.8"/></svg><svg style="left:35px;top:506px" width="16" height="14" viewBox="0 0 16 14"><path d="M1.2 7.8 L6 12 L14.6 1.2" stroke="#3d9b12" stroke-width="3.2" fill="none"/></svg><svg style="left:56px;top:505px" width="16" height="16" viewBox="0 0 16 16"><path d="M5.6 .4 L0 4.8 L6.6 9.6Z" fill="#fa6400"/><path d="M4.4 5 H9.6 A4.3 4.3 0 0 1 9.6 13.6 H6.4" stroke="#fa6400" stroke-width="3.1" fill="none"/></svg><div class="t" style="left:74.90px;top:505.00px;line-height:16px;height:16px;font-size:11.3px;transform-origin:0 50%;transform:scaleX(1.1312);color:#222">Default</div><div class="btn" style="left:251px;top:499.6px;width:26.7px;height:25px"></div><svg style="left:254px;top:504px" width="20" height="20" viewBox="0 0 20 20"><path d="M10.6 10.6 L15.2 15" stroke="#f68b1f" stroke-width="2.3" stroke-linecap="round"/><path d="M13.9 13.7 L14.5 14.3" stroke="#6d5a4a" stroke-width="2.3"/><circle cx="5.9" cy="5.9" r="5" fill="#74cbf8" stroke="#546e7a" stroke-width="1.2"/><path d="M3.3 7.2 A3.2 3.2 0 0 1 4.3 3.4" stroke="#d6f0ff" stroke-width=".9" fill="none"/></svg><div class="btn" style="left:288px;top:498.8px;width:33.7px;height:29px"></div><svg style="left:296px;top:504px" width="15" height="20" viewBox="0 0 15 20"><path d="M1.2 0 H9 L15 6 V18.6 A1.2 1.2 0 0 1 13.8 19.8 H1.2 A1.2 1.2 0 0 1 0 18.6 V1.2 A1.2 1.2 0 0 1 1.2 0Z" fill="#ffd767"/><path d="M9 0 L15 6 H10.2 A1.2 1.2 0 0 1 9 4.8Z" fill="#ffb300"/><path d="M3 11.9 H7.6 V9.6 L11.8 13.2 L7.6 16.8 V14.5 H3Z" fill="#64c3f5"/></svg><div class="a" style="left:7px;top:534px;width:1861px;height:114px;background:#fff"></div><div class="a" style="left:7px;top:534px;width:1861px;height:25px;background:#fafafa"></div><div class="vl" style="left:6px;top:534px;height:114px;background:#d4d4d4"></div><div class="a" style="left:51px;top:559px;width:1817px;height:23px;background:#ebf5fd"></div><div class="a" style="left:7px;top:559px;width:4px;height:23px;background:#b3d9ff"></div><div class="a" style="left:152px;top:606px;width:909px;height:22px;background:#ffff00"></div><div class="a" style="left:1061px;top:606px;width:807px;height:22px;background:#90ee90"></div><div class="hl" style="left:7px;top:534px;width:1861px;background:#dadada"></div><div class="vl" style="left:50px;top:535px;height:24px;background:#dcdcdc"></div><div class="vl" style="left:151px;top:535px;height:24px;background:#dcdcdc"></div><div class="vl" style="left:252px;top:535px;height:24px;background:#dcdcdc"></div><div class="vl" style="left:353px;top:535px;height:24px;background:#dcdcdc"></div><div class="vl" style="left:454px;top:535px;height:24px;background:#dcdcdc"></div><div class="vl" style="left:555px;top:535px;height:24px;background:#dcdcdc"></div><div class="vl" style="left:656px;top:535px;height:24px;background:#dcdcdc"></div><div class="vl" style="left:757px;top:535px;height:24px;background:#dcdcdc"></div><div class="vl" style="left:858px;top:535px;height:24px;background:#dcdcdc"></div><div class="vl" style="left:959px;top:535px;height:24px;background:#dcdcdc"></div><div class="vl" style="left:1060px;top:535px;height:24px;background:#dcdcdc"></div><div class="vl" style="left:1161px;top:535px;height:24px;background:#dcdcdc"></div><div class="vl" style="left:1262px;top:535px;height:24px;background:#dcdcdc"></div><div class="vl" style="left:1363px;top:535px;height:24px;background:#dcdcdc"></div><div class="vl" style="left:1464px;top:535px;height:24px;background:#dcdcdc"></div><div class="vl" style="left:1565px;top:535px;height:24px;background:#dcdcdc"></div><div class="vl" style="left:1666px;top:535px;height:24px;background:#dcdcdc"></div><div class="vl" style="left:1767px;top:535px;height:24px;background:#dcdcdc"></div><div class="vl" style="left:50px;top:559px;height:70px;background:#dcdcdc"></div><div class="hl" style="left:7px;top:559px;width:1861px;background:#dedede"></div><div class="hl" style="left:51px;top:582px;width:1817px;background:#dedede"></div><div class="hl" style="left:51px;top:605px;width:1817px;background:#dedede"></div><div class="hl" style="left:51px;top:628px;width:1817px;background:#dedede"></div><div class="vl" style="left:151px;top:606px;height:22px;background:#dedede"></div><div class="t" style="left:56.20px;top:539.00px;line-height:16px;height:16px;font-size:11.3px;transform-origin:0 50%;transform:scaleX(1.1650);color:#333">InfoType</div><div class="t" style="left:157.20px;top:539.00px;line-height:16px;height:16px;font-size:11.3px;transform-origin:0 50%;transform:scaleX(1.1225);color:#333">Past + On hand</div><div class="t" style="left:258.20px;top:539.00px;line-height:16px;height:16px;font-size:11.3px;transform-origin:0 50%;transform:scaleX(1.0888);color:#333">Wed 12 Feb</div><div class="t" style="left:359.20px;top:539.00px;line-height:16px;height:16px;font-size:11.3px;transform-origin:0 50%;transform:scaleX(1.0867);color:#333">Thu 13 Feb</div><div class="t" style="left:460.20px;top:539.00px;line-height:16px;height:16px;font-size:11.3px;transform-origin:0 50%;transform:scaleX(1.0972);color:#333">Fri 14 Feb</div><div class="t" style="left:561.20px;top:539.00px;line-height:16px;height:16px;font-size:11.3px;transform-origin:0 50%;transform:scaleX(1.0944);color:#333">Sat 15 Feb</div><div class="t" style="left:662.20px;top:539.00px;line-height:16px;height:16px;font-size:11.3px;transform-origin:0 50%;transform:scaleX(1.0817);color:#333">Sun 16 Feb</div><div class="t" style="left:763.20px;top:539.00px;line-height:16px;height:16px;font-size:11.3px;transform-origin:0 50%;transform:scaleX(1.0663);color:#333">Mon 17 Feb</div><div class="t" style="left:864.20px;top:539.00px;line-height:16px;height:16px;font-size:11.3px;transform-origin:0 50%;transform:scaleX(1.0894);color:#333">Tue 18 Feb</div><div class="t" style="left:965.20px;top:539.00px;line-height:16px;height:16px;font-size:11.3px;transform-origin:0 50%;transform:scaleX(1.0888);color:#333">Wed 19 Feb</div><div class="t" style="left:1066.20px;top:539.00px;line-height:16px;height:16px;font-size:11.3px;transform-origin:0 50%;transform:scaleX(1.0867);color:#333">Thu 20 Feb</div><div class="t" style="left:1167.20px;top:539.00px;line-height:16px;height:16px;font-size:11.3px;transform-origin:0 50%;transform:scaleX(1.0972);color:#333">Fri 21 Feb</div><div class="t" style="left:1268.20px;top:539.00px;line-height:16px;height:16px;font-size:11.3px;transform-origin:0 50%;transform:scaleX(1.0944);color:#333">Sat 22 Feb</div><div class="t" style="left:1369.20px;top:539.00px;line-height:16px;height:16px;font-size:11.3px;transform-origin:0 50%;transform:scaleX(1.0817);color:#333">Sun 23 Feb</div><div class="t" style="left:1470.20px;top:539.00px;line-height:16px;height:16px;font-size:11.3px;transform-origin:0 50%;transform:scaleX(1.0663);color:#333">Mon 24 Feb</div><div class="t" style="left:1571.20px;top:539.00px;line-height:16px;height:16px;font-size:11.3px;transform-origin:0 50%;transform:scaleX(1.0894);color:#333">Tue 25 Feb</div><div class="t" style="left:1672.20px;top:539.00px;line-height:16px;height:16px;font-size:11.3px;transform-origin:0 50%;transform:scaleX(1.0888);color:#333">Wed 26 Feb</div><div class="t" style="left:1773.20px;top:539.00px;line-height:16px;height:16px;font-size:11.3px;transform-origin:0 50%;transform:scaleX(1.0867);color:#333">Thu 27 Feb</div><svg style="left:16.4px;top:566.6px" width="8" height="10" viewBox="0 0 8 10"><path d="M.6 .7 L6.6 5 L.6 9.3Z" fill="none" stroke="#666" stroke-width="1"/></svg><div class="t" style="left:30.50px;top:564.50px;line-height:16px;height:16px;font-size:11.3px;transform-origin:0 50%;transform:scaleX(0.8500);color:#666">1</div><div class="t" style="left:14.00px;top:587.50px;line-height:16px;height:16px;font-size:11.3px;transform-origin:0 50%;transform:scaleX(1.0820);color:#666">2</div><div class="t" style="left:14.00px;top:610.50px;line-height:16px;height:16px;font-size:11.3px;transform-origin:0 50%;transform:scaleX(1.0820);color:#666">3</div><div class="t" style="left:55.00px;top:563.30px;line-height:16px;height:16px;font-size:11.3px;transform-origin:0 50%;transform:scaleX(1.1201);color:#222">- Job Materials</div><div class="t" style="left:55.00px;top:586.30px;line-height:16px;height:16px;font-size:11.3px;transform-origin:0 50%;transform:scaleX(1.1129);color:#222">+ Purchase To...</div><div class="t" style="left:55.00px;top:609.30px;line-height:16px;height:16px;font-size:11.3px;transform-origin:0 50%;transform:scaleX(1.1681);color:#222">Net Inventory</div><div class="t" style="right:1626.20px;top:563.30px;font-size:11.3px;transform-origin:100% 50%;transform:scaleX(1.108);color:#222">0.00</div><div class="t" style="right:1525.20px;top:563.30px;font-size:11.3px;transform-origin:100% 50%;transform:scaleX(1.108);color:#222">20,000.00</div><div class="t" style="right:1424.20px;top:563.30px;font-size:11.3px;transform-origin:100% 50%;transform:scaleX(1.108);color:#222">0.00</div><div class="t" style="right:1323.20px;top:563.30px;font-size:11.3px;transform-origin:100% 50%;transform:scaleX(1.108);color:#222">20,000.00</div><div class="t" style="right:1222.20px;top:563.30px;font-size:11.3px;transform-origin:100% 50%;transform:scaleX(1.108);color:#222">0.00</div><div class="t" style="right:1121.20px;top:563.30px;font-size:11.3px;transform-origin:100% 50%;transform:scaleX(1.108);color:#222">0.00</div><div class="t" style="right:1020.20px;top:563.30px;font-size:11.3px;transform-origin:100% 50%;transform:scaleX(1.108);color:#222">10,000.00</div><div class="t" style="right:919.20px;top:563.30px;font-size:11.3px;transform-origin:100% 50%;transform:scaleX(1.108);color:#222">10,000.00</div><div class="t" style="right:818.20px;top:563.30px;font-size:11.3px;transform-origin:100% 50%;transform:scaleX(1.108);color:#222">10,000.00</div><div class="t" style="right:717.20px;top:563.30px;font-size:11.3px;transform-origin:100% 50%;transform:scaleX(1.108);color:#222">0.00</div><div class="t" style="right:616.20px;top:563.30px;font-size:11.3px;transform-origin:100% 50%;transform:scaleX(1.108);color:#222">0.00</div><div class="t" style="right:515.20px;top:563.30px;font-size:11.3px;transform-origin:100% 50%;transform:scaleX(1.108);color:#222">0.00</div><div class="t" style="right:414.20px;top:563.30px;font-size:11.3px;transform-origin:100% 50%;transform:scaleX(1.108);color:#222">0.00</div><div class="t" style="right:313.20px;top:563.30px;font-size:11.3px;transform-origin:100% 50%;transform:scaleX(1.108);color:#222">10,000.00</div><div class="t" style="right:212.20px;top:563.30px;font-size:11.3px;transform-origin:100% 50%;transform:scaleX(1.108);color:#222">10,000.00</div><div class="t" style="right:111.20px;top:563.30px;font-size:11.3px;transform-origin:100% 50%;transform:scaleX(1.108);color:#222">0.00</div><div class="t" style="right:10.20px;top:563.30px;font-size:11.3px;transform-origin:100% 50%;transform:scaleX(1.108);color:#222">0.00</div><div class="t" style="right:1626.20px;top:586.30px;font-size:11.3px;transform-origin:100% 50%;transform:scaleX(1.108);color:#222">0.00</div><div class="t" style="right:1525.20px;top:586.30px;font-size:11.3px;transform-origin:100% 50%;transform:scaleX(1.108);color:#222">18,000.00</div><div class="t" style="right:1424.20px;top:586.30px;font-size:11.3px;transform-origin:100% 50%;transform:scaleX(1.108);color:#222">20,000.00</div><div class="t" style="right:1323.20px;top:586.30px;font-size:11.3px;transform-origin:100% 50%;transform:scaleX(1.108);color:#222">0.00</div><div class="t" style="right:1222.20px;top:586.30px;font-size:11.3px;transform-origin:100% 50%;transform:scaleX(1.108);color:#222">0.00</div><div class="t" style="right:1121.20px;top:586.30px;font-size:11.3px;transform-origin:100% 50%;transform:scaleX(1.108);color:#222">0.00</div><div class="t" style="right:1020.20px;top:586.30px;font-size:11.3px;transform-origin:100% 50%;transform:scaleX(1.108);color:#222">0.00</div><div class="t" style="right:919.20px;top:586.30px;font-size:11.3px;transform-origin:100% 50%;transform:scaleX(1.108);color:#222">20,000.00</div><div class="t" style="right:818.20px;top:586.30px;font-size:11.3px;transform-origin:100% 50%;transform:scaleX(1.108);color:#222">20,000.00</div><div class="t" style="right:717.20px;top:586.30px;font-size:11.3px;transform-origin:100% 50%;transform:scaleX(1.108);color:#222">20,000.00</div><div class="t" style="right:616.20px;top:586.30px;font-size:11.3px;transform-origin:100% 50%;transform:scaleX(1.108);color:#222">20,000.00</div><div class="t" style="right:515.20px;top:586.30px;font-size:11.3px;transform-origin:100% 50%;transform:scaleX(1.108);color:#222">0.00</div><div class="t" style="right:414.20px;top:586.30px;font-size:11.3px;transform-origin:100% 50%;transform:scaleX(1.108);color:#222">20,000.00</div><div class="t" style="right:313.20px;top:586.30px;font-size:11.3px;transform-origin:100% 50%;transform:scaleX(1.108);color:#222">10,000.00</div><div class="t" style="right:212.20px;top:586.30px;font-size:11.3px;transform-origin:100% 50%;transform:scaleX(1.108);color:#222">40,000.00</div><div class="t" style="right:111.20px;top:586.30px;font-size:11.3px;transform-origin:100% 50%;transform:scaleX(1.108);color:#222">20,000.00</div><div class="t" style="right:10.20px;top:586.30px;font-size:11.3px;transform-origin:100% 50%;transform:scaleX(1.108);color:#222">20,000.00</div><div class="t" style="right:1626.20px;top:609.30px;font-size:11.3px;transform-origin:100% 50%;transform:scaleX(1.108);color:#0000ff">12,000.00</div><div class="t" style="right:1525.20px;top:609.30px;font-size:11.3px;transform-origin:100% 50%;transform:scaleX(1.108);color:#0000ff">10,000.00</div><div class="t" style="right:1424.20px;top:609.30px;font-size:11.3px;transform-origin:100% 50%;transform:scaleX(1.108);color:#0000ff">30,000.00</div><div class="t" style="right:1323.20px;top:609.30px;font-size:11.3px;transform-origin:100% 50%;transform:scaleX(1.108);color:#0000ff">10,000.00</div><div class="t" style="right:1222.20px;top:609.30px;font-size:11.3px;transform-origin:100% 50%;transform:scaleX(1.108);color:#0000ff">10,000.00</div><div class="t" style="right:1121.20px;top:609.30px;font-size:11.3px;transform-origin:100% 50%;transform:scaleX(1.108);color:#0000ff">10,000.00</div><div class="t" style="right:1020.20px;top:609.30px;font-size:11.3px;transform-origin:100% 50%;transform:scaleX(1.108);color:#0000ff">0.00</div><div class="t" style="right:919.20px;top:609.30px;font-size:11.3px;transform-origin:100% 50%;transform:scaleX(1.108);color:#0000ff">10,000.00</div><div class="t" style="right:818.20px;top:609.30px;font-size:11.3px;transform-origin:100% 50%;transform:scaleX(1.108);color:#222">20,000.00</div><div class="t" style="right:717.20px;top:609.30px;font-size:11.3px;transform-origin:100% 50%;transform:scaleX(1.108);color:#222">40,000.00</div><div class="t" style="right:616.20px;top:609.30px;font-size:11.3px;transform-origin:100% 50%;transform:scaleX(1.108);color:#222">60,000.00</div><div class="t" style="right:515.20px;top:609.30px;font-size:11.3px;transform-origin:100% 50%;transform:scaleX(1.108);color:#222">60,000.00</div><div class="t" style="right:414.20px;top:609.30px;font-size:11.3px;transform-origin:100% 50%;transform:scaleX(1.108);color:#222">80,000.00</div><div class="t" style="right:313.20px;top:609.30px;font-size:11.3px;transform-origin:100% 50%;transform:scaleX(1.108);color:#222">80,000.00</div><div class="t" style="right:212.20px;top:609.30px;font-size:11.3px;transform-origin:100% 50%;transform:scaleX(1.108);color:#222">110,000.00</div><div class="t" style="right:111.20px;top:609.30px;font-size:11.3px;transform-origin:100% 50%;transform:scaleX(1.108);color:#222">130,000.00</div><div class="t" style="right:10.20px;top:609.30px;font-size:11.3px;transform-origin:100% 50%;transform:scaleX(1.108);color:#222">150,000.00</div><div class="a" style="left:1871px;top:0px;width:1px;height:648px;background:#d2d2d2"></div><div class="a" style="left:1872px;top:0px;width:3px;height:648px;background:#f7f7f7"></div></body></html>
